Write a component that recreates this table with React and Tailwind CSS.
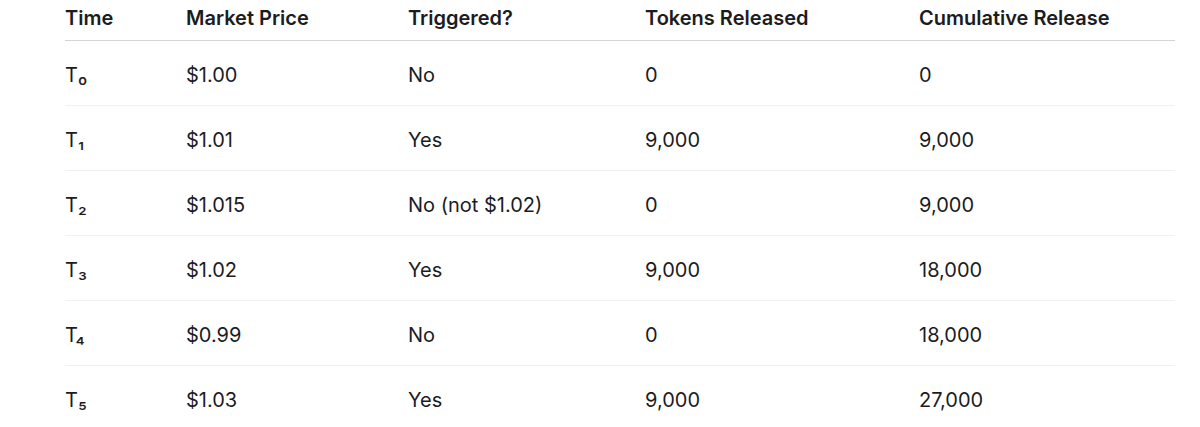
const rows = [
  { time: 'T₀', price: '$1.00', triggered: 'No', released: '0', cumulative: '0' },
  { time: 'T₁', price: '$1.01', triggered: 'Yes', released: '9,000', cumulative: '9,000' },
  { time: 'T₂', price: '$1.015', triggered: 'No (not $1.02)', released: '0', cumulative: '9,000' },
  { time: 'T₃', price: '$1.02', triggered: 'Yes', released: '9,000', cumulative: '18,000' },
  { time: 'T₄', price: '$0.99', triggered: 'No', released: '0', cumulative: '18,000' },
  { time: 'T₅', price: '$1.03', triggered: 'Yes', released: '9,000', cumulative: '27,000' },
];

const cols = 'grid grid-cols-[121px_222px_237px_274px_1fr]';

export default function App() {
  return (
    <div className="w-[1200px] h-[427px] bg-white overflow-hidden font-['Inter',sans-serif] text-[#1c1c1e]">
      <div className="ml-[65px] w-[1110px]">
        <div className={`${cols} h-[41px] items-center border-b-[1.5px] border-[#d4d4d4] text-[20px] font-semibold`}>
          <div className="-mt-[5px]">Time</div>
          <div className="-mt-[5px]">Market Price</div>
          <div className="-mt-[5px]">Triggered?</div>
          <div className="-mt-[5px]">Tokens Released</div>
          <div className="-mt-[5px]">Cumulative Release</div>
        </div>
        {rows.map((r, i) => (
          <div
            key={i}
            className={`${cols} h-[65px] pt-[3px] items-center text-[20px] ${i < rows.length - 1 ? 'border-b-[1.5px] border-[#f0f0f0]' : ''}`}
          >
            <div>{r.time}</div>
            <div>{r.price}</div>
            <div>{r.triggered}</div>
            <div>{r.released}</div>
            <div>{r.cumulative}</div>
          </div>
        ))}
      </div>
    </div>
  );
}
